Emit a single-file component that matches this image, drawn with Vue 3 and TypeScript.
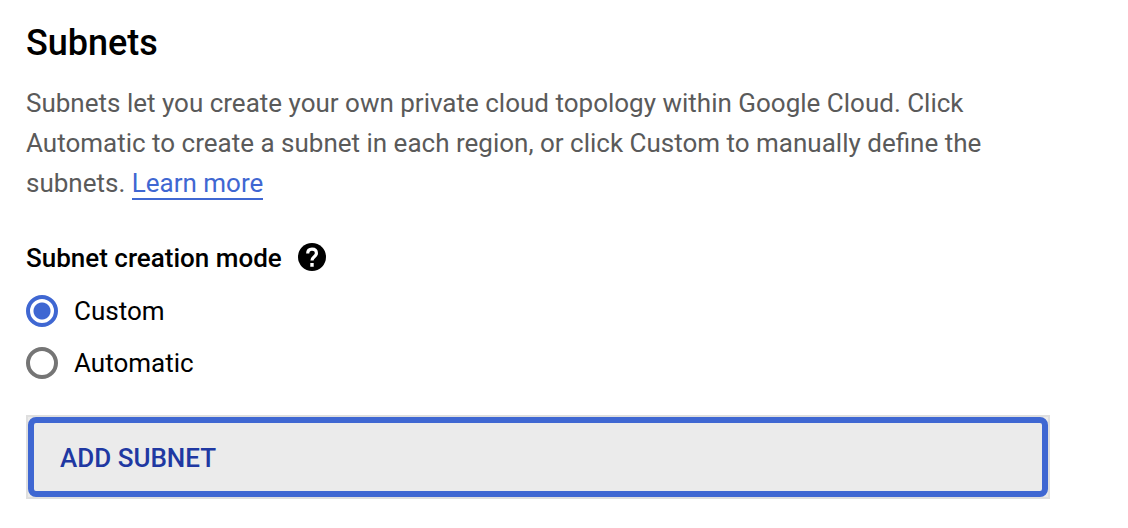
<script setup lang="ts">
import { ref } from 'vue'

type Mode = 'custom' | 'automatic'

const mode = ref<Mode>('custom')
const modes: { value: Mode; label: string }[] = [
  { value: 'custom', label: 'Custom' },
  { value: 'automatic', label: 'Automatic' },
]
</script>

<template>
  <main class="panel">
    <h1 class="title">Subnets</h1>
    <p class="intro">
      Subnets let you create your own private cloud topology within Google Cloud. Click
      Automatic to create a subnet in each region, or click Custom to manually define the
      subnets. <a class="link" href="#">Learn more</a>
    </p>
    <div class="modes" role="radiogroup" aria-labelledby="mode-label">
      <div class="modes-head">
        <span id="mode-label" class="modes-label">Subnet creation mode</span>
        <button class="help" type="button" aria-label="Help">
          <svg viewBox="0 0 28 28" width="28" height="28" aria-hidden="true">
            <circle cx="14" cy="14" r="14" fill="#000" />
            <path
              d="M9.7 10.6C9.7 7.8 11.4 6.2 14 6.2s4.4 1.5 4.4 4c0 3.6-4.4 3.6-4.4 7.4"
              fill="none"
              stroke="#fff"
              stroke-width="3.2"
            />
            <path d="M12.3 20h3.4v3.8h-3.4z" fill="#fff" />
          </svg>
        </button>
      </div>
      <label v-for="m in modes" :key="m.value" class="option">
        <input v-model="mode" class="radio" type="radio" name="mode" :value="m.value" />
        <span>{{ m.label }}</span>
      </label>
    </div>
    <div class="add-wrap">
      <button class="add" type="button">ADD SUBNET</button>
    </div>
  </main>
</template>

<style>
body {
  background: #fff;
}
</style>

<style scoped>
.panel {
  box-sizing: border-box;
  max-width: 1076px;
  padding: 19px 26px 28px;
  font-family: Roboto, "Liberation Sans", sans-serif;
  font-size: 26px;
  color: #000;
}
.title {
  margin: 0;
  font-size: 36px;
  line-height: 48px;
  font-weight: 500;
}
.intro {
  margin: 16px 0 0;
  line-height: 40px;
  color: #5a5a5a;
}
.link {
  color: #3f67d2;
  text-decoration: none;
  border-bottom: 2px solid #3f67d2;
}
.modes {
  margin-top: 40px;
}
.modes-head {
  display: flex;
  align-items: flex-start;
  gap: 16px;
  margin-bottom: 12px;
}
.modes-label {
  font-weight: 500;
  line-height: 30px;
}
.help {
  display: flex;
  padding: 0;
  border: 0;
  background: none;
}
.option {
  display: flex;
  align-items: center;
  gap: 16px;
  height: 52px;
}
.radio {
  appearance: none;
  box-sizing: border-box;
  width: 32px;
  height: 32px;
  margin: 0;
  border: 4px solid #757575;
  border-radius: 50%;
}
.radio:checked {
  border-color: #3f67d2;
  background: radial-gradient(circle, #3f67d2 8px, transparent 9px);
}
.add-wrap {
  margin-top: 26px;
  border: 2px solid #dfdfdf;
  background: #ebebeb;
}
.add {
  display: block;
  box-sizing: border-box;
  width: 100%;
  padding: 17px 26px 15px;
  border: 6px solid #3f67d2;
  border-radius: 8px;
  background: #ebebeb;
  color: #2038a2;
  font: inherit;
  font-weight: 500;
  line-height: 36px;
  text-align: left;
}
</style>
